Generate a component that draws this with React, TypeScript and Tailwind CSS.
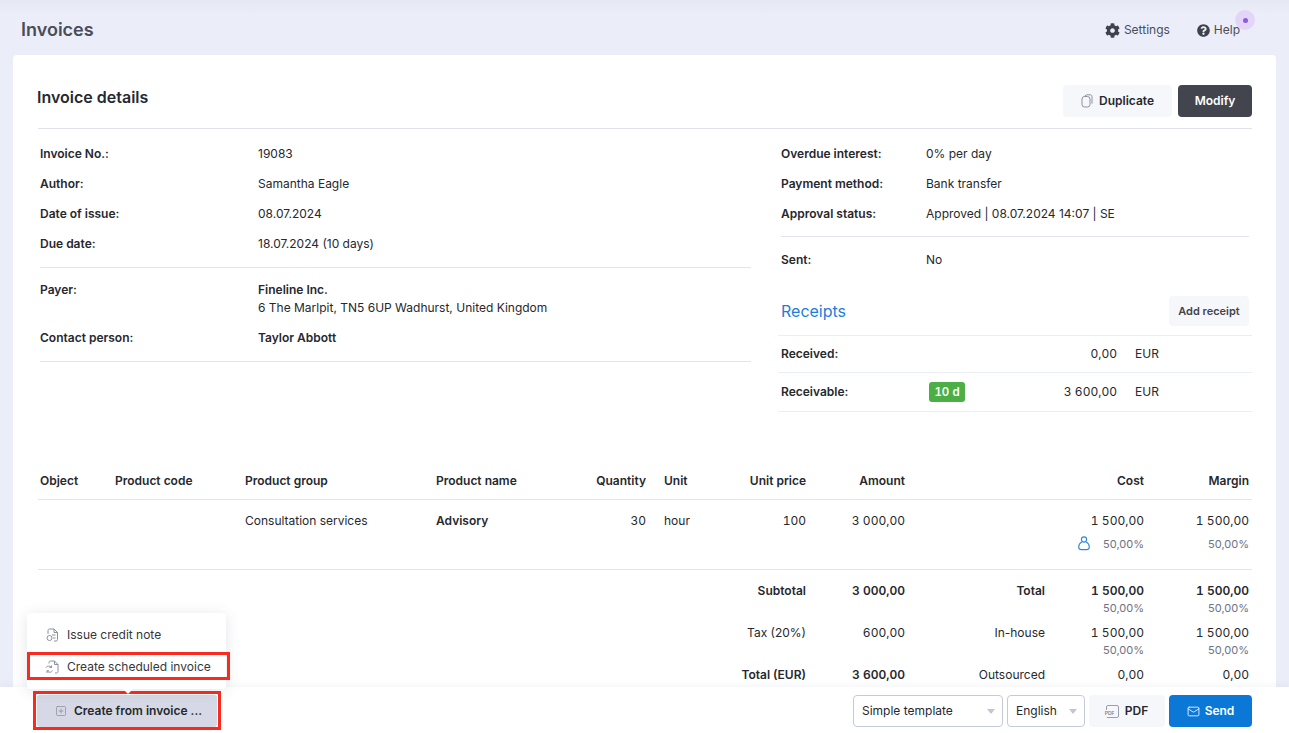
import { FaCog, FaQuestionCircle } from "react-icons/fa";
import { Mail, SquarePlus } from "lucide-react";
import type { ReactNode } from "react";

const Label = ({ children }: { children: ReactNode }) => (
  <span className="font-semibold text-[#26282e]">{children}</span>
);

const Line = ({ className = "" }: { className?: string }) => (
  <div className={`h-px bg-[#e3e5ee] ${className}`} />
);

const InfoRow = ({ label, width, children }: { label: string; width: string; children: ReactNode }) => (
  <div className={`grid h-[30px] items-center ${width}`}>
    <Label>{label}</Label>
    <span>{children}</span>
  </div>
);

const leftCols = "grid-cols-[218px_1fr]";
const rightCols = "grid-cols-[145px_1fr]";
const tableCols = "grid-cols-[75px_130px_191px_130px_80px_60px_100px_99px_239px_105px]";
const totalCols = "grid-cols-[766px_99px_140px_99px_105px]";

const Percent = ({ children }: { children: ReactNode }) => (
  <div className="text-right text-[11px] leading-[14px] text-[#6d7284] normal-nums">{children}</div>
);

const DuplicateIcon = () => (
  <svg width="12" height="14" viewBox="0 0 12 14" fill="none" stroke="#8b90a0" strokeWidth="1">
    <path d="M3.500 2.200 5.800.8h3.400c1 0 1.800.8 1.800 1.800v7" />
    <rect x="1" y="2.500" width="8" height="10.500" rx="2.500" />
  </svg>
);

const UserIcon = () => (
  <svg width="12" height="15" viewBox="0 0 12 15" fill="none" stroke="#2f86dc" strokeWidth="1.1">
    <circle cx="6" cy="3.500" r="2.600" />
    <path d="M3.800 6C1.800 7 .7 9 .7 11c0 1.600 1 2.600 2.500 2.600h5.600c1.500 0 2.500-1 2.500-2.600 0-2-1.100-4-3.100-5" />
  </svg>
);

const CreditIcon = () => (
  <svg width="13" height="14" viewBox="0 0 13 14" fill="none" stroke="#8b90a0" strokeWidth="1">
    <path d="M2 6V2.500C2 1.500 2.700 1 3.500 1H8l3.500 3.500v7c0 1-.7 1.500-1.500 1.500H8" />
    <path d="M8 1v3.500h3.500M6 7h3.500M7 10h2.500" />
    <circle cx="3.500" cy="10" r="2.500" />
  </svg>
);

const ScheduledIcon = () => (
  <svg width="14" height="14" viewBox="0 0 14 14" fill="none" stroke="#8b90a0" strokeWidth="1">
    <path d="M4 3.500V2.500C4 1.500 4.700 1 5.500 1H9.500l3.500 3.500v7c0 1-.7 1.500-1.500 1.500H10" />
    <path d="M9.500 1v3.500H13" />
    <path d="M1 7.500C1.800 5.800 5 5.500 6.500 7.500M6.500 5.500v2H4.500" />
    <path d="M7.500 10.500C6.700 12.500 3.500 13 2 10.800M2 13v-2.200h2" />
  </svg>
);

const PdfIcon = () => (
  <span className="relative flex h-[13px] w-[13px] rounded-[2px] border border-[#9a9eae]">
    <span className="absolute -left-[3px] top-[4px] bg-[#f6f7fb] px-px text-[5px] font-semibold leading-[7px] text-[#7c8192]">
      PDF
    </span>
  </span>
);

const Select = ({ children, width }: { children: string; width: string }) => (
  <div className={`flex h-[32px] items-center justify-between rounded-[4px] border border-[#c5cada] bg-white pl-2 pr-[7px] text-[#26282e] ${width}`}>
    <span>{children}</span>
    <span className="h-0 w-0 border-x-[4px] border-t-[5px] border-x-transparent border-t-[#c2c6d4]" />
  </div>
);

export default function App() {
  return (
    <div className="relative flex h-[733px] w-full flex-col overflow-hidden bg-gradient-to-b from-[#e6e9f3] from-0% to-[#ebeef9] to-[2%] font-['Inter',sans-serif] text-[12px] text-[#26282e]">
      {/* Top bar */}
      <header className="flex h-[55px] shrink-0 items-start justify-between pl-[21px] pr-[49px]">
        <h1 className="mt-[18px] text-[18px] font-semibold leading-[24px] text-[#4a4d57]">Invoices</h1>
        <div className="mt-[21px] flex items-center gap-[27px] text-[#4a4d57]">
          <span className="flex items-center gap-[4px]">
            <FaCog size={15} className="text-[#3f424c]" />
            Settings
          </span>
          <span className="relative flex items-center gap-[4px]">
            <FaQuestionCircle size={13} className="text-[#3f424c]" />
            Help
            <span className="absolute -right-[15px] -top-[11px] flex h-5 w-5 items-center justify-center rounded-full bg-[#e3d5f7]">
              <span className="h-[5px] w-[5px] rounded-full bg-[#8f5bd9]" />
            </span>
          </span>
        </div>
      </header>

      {/* Card */}
      <main className="mx-[13px] flex-1 overflow-hidden rounded-t-[4px] bg-white pl-[25px] pr-[24px]">
        <div className="flex h-[74px] items-start justify-between border-b border-[#dfe2eb] pt-[30px]">
          <h2 className="ml-[-1px] mt-[1px] text-[16px] font-semibold leading-[22px] text-[#26282e]">Invoice details</h2>
          <div className="flex gap-[6px]">
            <button className="flex h-[32px] w-[109px] items-center justify-center gap-[6px] rounded-[4px] bg-[#f6f7fb] font-semibold text-[#26282e]">
              <DuplicateIcon />
              Duplicate
            </button>
            <button className="h-[32px] w-[74px] rounded-[4px] bg-[#42454e] font-semibold text-white">Modify</button>
          </div>
        </div>

        <div className="flex">
          {/* Left details */}
          <section className="ml-[2px] mt-[10px] w-[711px]">
            <InfoRow label="Invoice No.:" width={leftCols}>19083</InfoRow>
            <InfoRow label="Author:" width={leftCols}>Samantha Eagle</InfoRow>
            <InfoRow label="Date of issue:" width={leftCols}>08.07.2024</InfoRow>
            <InfoRow label="Due date:" width={leftCols}>18.07.2024 (10 days)</InfoRow>
            <Line className="mt-[8px]" />
            <div className={`mt-[13px] grid ${leftCols} leading-[18px]`}>
              <Label>Payer:</Label>
              <div>
                <div className="font-semibold">Fineline Inc.</div>
                <div>6 The Marlpit, TN5 6UP Wadhurst, United Kingdom</div>
              </div>
            </div>
            <div className={`mt-[12px] grid ${leftCols} leading-[18px]`}>
              <Label>Contact person:</Label>
              <span className="font-semibold">Taylor Abbott</span>
            </div>
            <Line className="mt-[14px]" />
          </section>

          {/* Right details */}
          <section className="ml-[27px] mt-[10px] flex-1">
            <div className="mx-[3px]">
              <InfoRow label="Overdue interest:" width={rightCols}>0% per day</InfoRow>
              <InfoRow label="Payment method:" width={rightCols}>Bank transfer</InfoRow>
              <InfoRow label="Approval status:" width={rightCols}>Approved | 08.07.2024 14:07 | SE</InfoRow>
              <Line className="mt-[7px]" />
              <div className="mt-[8px]">
                <InfoRow label="Sent:" width={rightCols}>No</InfoRow>
              </div>
              <div className="mt-[21px] flex h-[30px] items-center justify-between">
                <h3 className="text-[16px] leading-[22px] text-[#1e7ddb]">Receipts</h3>
                <button className="h-[30px] w-[80px] rounded-[4px] bg-[#f6f7fb] text-[11px] font-semibold text-[#42454e]">Add receipt</button>
              </div>
            </div>
            <Line className="mt-[9px] bg-[#eceef5]" />
            <div className="grid h-[36px] grid-cols-[150px_186px_1fr] items-center pl-[3px]">
              <Label>Received:</Label>
              <span className="text-right tabular-nums">0,00</span>
              <span className="pl-[18px]">EUR</span>
            </div>
            <Line className="bg-[#eceef5]" />
            <div className="grid h-[38px] grid-cols-[150px_186px_1fr] items-center pl-[3px]">
              <Label>Receivable:</Label>
              <div className="relative text-right tabular-nums">
                <span className="absolute -top-px -left-[2px] flex h-5 w-9 items-center justify-center rounded-[3px] bg-[#4caf45] pt-px text-[11.500px] font-semibold text-white">10 d</span>
                3 600,00
              </div>
              <span className="pl-[18px]">EUR</span>
            </div>
            <Line className="bg-[#eceef5]" />
          </section>
        </div>

        {/* Products table */}
        <div className={`mt-[60px] grid ${tableCols} pb-[9px] pl-[2px] font-semibold leading-[18px]`}>
          <span>Object</span>
          <span>Product code</span>
          <span>Product group</span>
          <span>Product name</span>
          <span className="text-right">Quantity</span>
          <span className="pl-[18px]">Unit</span>
          <span className="text-right">Unit price</span>
          <span className="text-right">Amount</span>
          <span className="text-right">Cost</span>
          <span className="text-right">Margin</span>
        </div>
        <Line />
        <div className={`grid ${tableCols} h-[69px] pl-[2px] pt-[12px] leading-[18px] tabular-nums`}>
          <span />
          <span />
          <span>Consultation services</span>
          <span className="font-semibold">Advisory</span>
          <span className="text-right">30</span>
          <span className="pl-[18px]">hour</span>
          <span className="text-right">100</span>
          <span className="text-right">3 000,00</span>
          <div>
            <div className="text-right">1 500,00</div>
            <div className="mt-[6px] flex items-center justify-end gap-[13px]">
              <UserIcon />
              <Percent>50,00%</Percent>
            </div>
          </div>
          <div>
            <div className="text-right">1 500,00</div>
            <div className="mt-[6px] flex h-[15px] items-center justify-end">
              <Percent>50,00%</Percent>
            </div>
          </div>
        </div>
        <Line />

        {/* Totals */}
        <div className={`mt-[12px] grid ${totalCols} pl-[2px] leading-[18px] tabular-nums`}>
          <span className="text-right font-semibold">Subtotal</span>
          <span className="text-right font-semibold">3 000,00</span>
          <span className="text-right font-semibold">Total</span>
          <div>
            <div className="text-right font-semibold">1 500,00</div>
            <div className="pt-px">
              <Percent>50,00%</Percent>
            </div>
          </div>
          <div>
            <div className="text-right font-semibold">1 500,00</div>
            <div className="pt-px">
              <Percent>50,00%</Percent>
            </div>
          </div>
        </div>
        <div className={`mt-[9px] grid ${totalCols} pl-[2px] leading-[18px] tabular-nums`}>
          <span className="text-right normal-nums">Tax (20%)</span>
          <span className="text-right">600,00</span>
          <span className="text-right normal-nums">In-house</span>
          <div>
            <div className="text-right">1 500,00</div>
            <div className="pt-px">
              <Percent>50,00%</Percent>
            </div>
          </div>
          <div>
            <div className="text-right">1 500,00</div>
            <div className="pt-px">
              <Percent>50,00%</Percent>
            </div>
          </div>
        </div>
        <div className={`mt-[9px] grid ${totalCols} pl-[2px] leading-[18px] tabular-nums`}>
          <span className="text-right font-semibold normal-nums">Total (EUR)</span>
          <span className="text-right font-semibold">3 600,00</span>
          <span className="text-right normal-nums">Outsourced</span>
          <span className="text-right">0,00</span>
          <span className="text-right">0,00</span>
        </div>
      </main>

      {/* Popover menu */}
      <div className="absolute left-[27px] top-[613px] z-20 w-[199px] rounded-[4px] bg-white pt-[5px] shadow-[0_2px_14px_rgba(60,70,100,0.14)]">
        <div className="flex h-[33px] items-center gap-[8px] pl-[19px] text-[#33363e]">
          <CreditIcon />
          Issue credit note
        </div>
        <div className="mt-px flex h-[28px] w-[203px] items-center gap-[8px] pl-[18px] pt-px text-[#33363e] outline-[3px] -outline-offset-[3px] outline-[#fa2a1e]">
          <ScheduledIcon />
          Create scheduled invoice
        </div>
        <div className="h-[9px]" />
        <span className="absolute left-[96px] top-full h-0 w-0 border-x-[5px] border-t-[5px] border-x-transparent border-t-white" />
      </div>

      {/* Footer bar */}
      <footer className="absolute inset-x-0 bottom-0 z-10 flex h-[46px] items-end justify-between bg-white pb-[3px] pl-[33px] pr-[37px] shadow-[0_-2px_8px_rgba(60,70,100,0.05)]">
        <div className="border-[3px] border-[#fa2a1e] px-px pt-px">
          <button className="flex h-[32px] w-[180px] items-center justify-center gap-[7px] rounded-[3px] bg-[#d6d9e5] pl-[3px] font-semibold text-[#26282e]">
            <SquarePlus size={12} strokeWidth={1.25} className="text-[#7c8192]" />
            Create from invoice ...
          </button>
        </div>
        <div className="mb-[3px] flex items-center gap-[4px]">
          <Select width="w-[150px]">Simple template</Select>
          <Select width="w-[78px]">English</Select>
          <button className="flex h-[32px] w-[76px] items-center justify-center gap-[6px] rounded-[4px] bg-[#f6f7fb] font-semibold">
            <PdfIcon />
            PDF
          </button>
          <button className="flex h-[32px] w-[83px] items-center justify-center gap-[5px] rounded-[4px] bg-[#0b78d8] font-semibold text-white">
            <Mail size={13} strokeWidth={1.5} />
            Send
          </button>
        </div>
      </footer>
    </div>
  );
}
